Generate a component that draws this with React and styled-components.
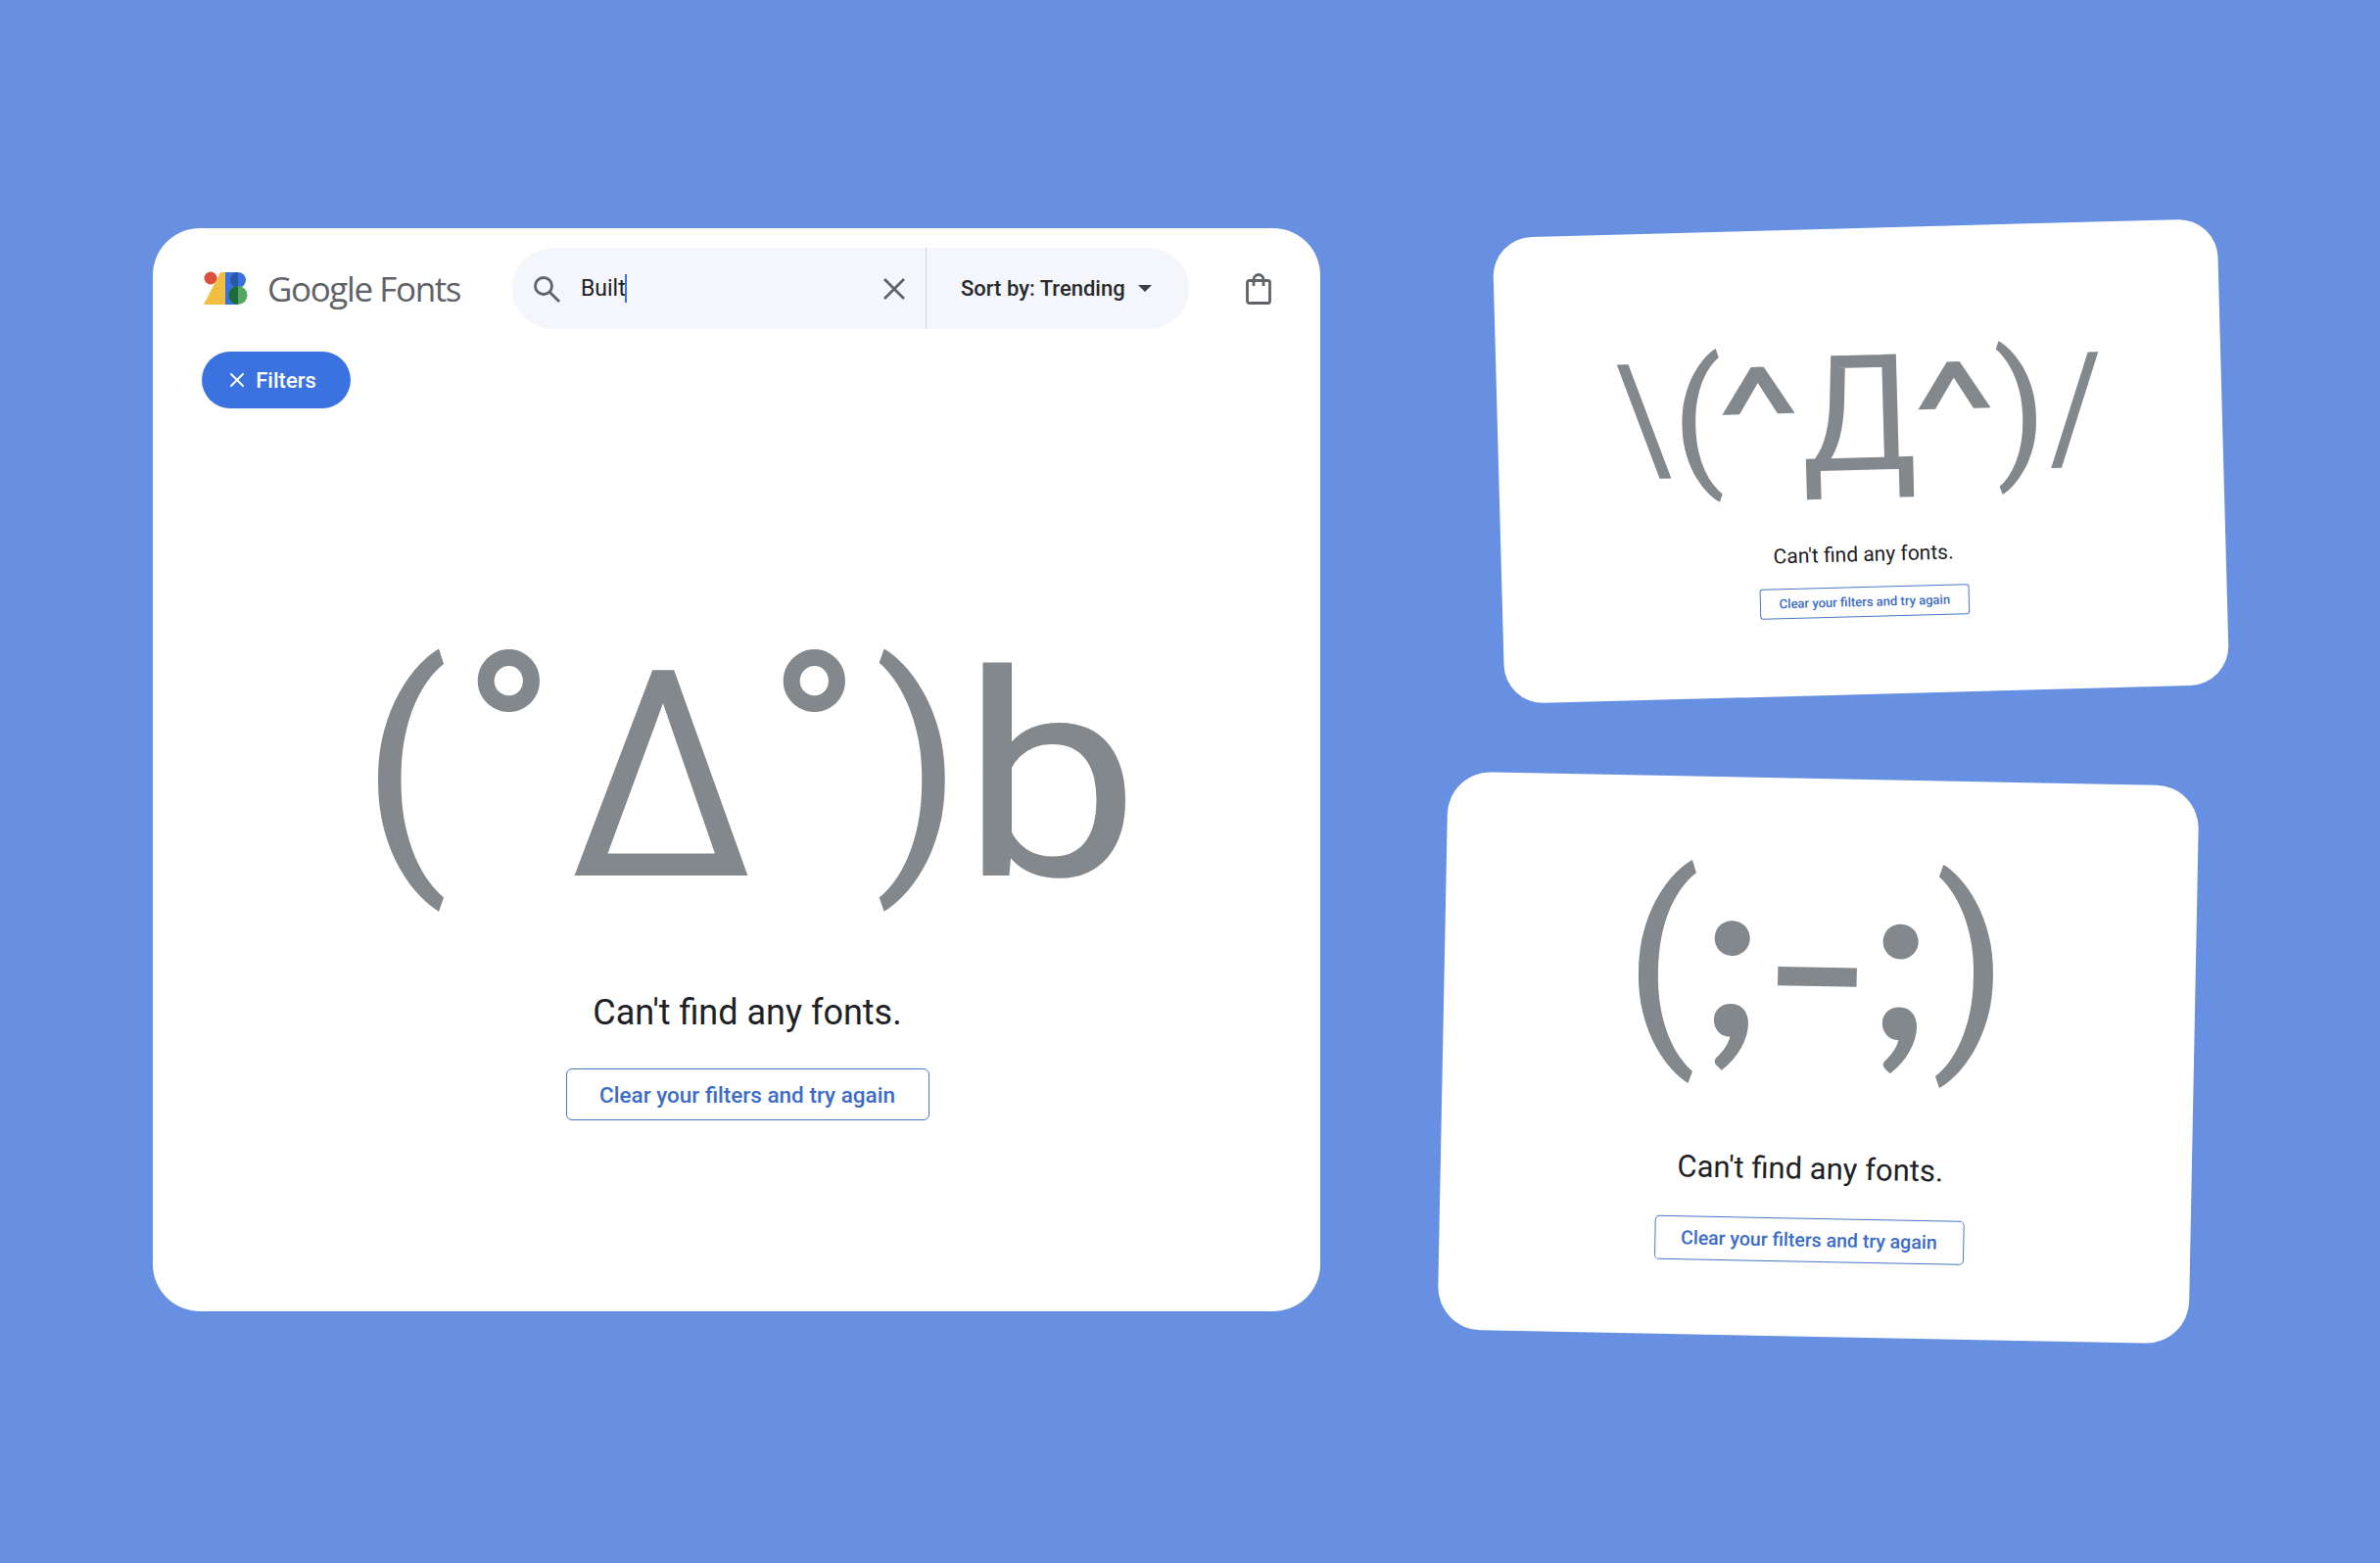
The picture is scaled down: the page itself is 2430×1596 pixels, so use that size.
import React from 'react';
import styled, { createGlobalStyle } from 'styled-components';
import { X } from 'lucide-react';

const GlobalStyle = createGlobalStyle`
  html, body {
    margin: 0;
    padding: 0;
    background-color: #6790e2;
    font-family: Roboto, "Open Sans", sans-serif;
  }
`;

const Stage = styled.div`
  width: 2430px;
  height: 1596px;
  box-sizing: border-box;
  padding: 233px 0 0 156px;
  display: flex;
  align-items: flex-start;
  background-color: #6790e2;
  overflow: hidden;
`;

const MainCard = styled.section`
  width: 1192px;
  height: 1106px;
  box-sizing: border-box;
  padding: 20px 50px 0;
  display: flex;
  flex-direction: column;
  background-color: #fff;
  border-radius: 48px;
`;

const SideColumn = styled.div`
  margin-left: 125px;
  display: flex;
  flex-direction: column;
  align-items: flex-start;
  gap: 86px;
`;

const TiltedCard = styled.section`
  width: ${(p) => p.$width}px;
  height: ${(p) => p.$height}px;
  margin-left: ${(p) => p.$indent}px;
  padding-top: ${(p) => p.$top}px;
  box-sizing: border-box;
  background-color: #fff;
  border-radius: ${(p) => p.$radius}px;
  transform: rotate(${(p) => p.$tilt}deg);
`;

const Header = styled.header`
  display: flex;
  align-items: center;
  height: 83px;
`;

const Brand = styled.div`
  width: 315px;
  margin-left: 2px;
  display: flex;
  align-items: center;
  gap: 19px;
`;

const Wordmark = styled.span`
  font-family: "Open Sans", sans-serif;
  font-size: 35px;
  letter-spacing: -1.4px;
  color: #5f6368;
  white-space: nowrap;
`;

const SearchBar = styled.div`
  width: 691px;
  height: 83px;
  display: flex;
  align-items: center;
  background-color: #f4f6fb;
  border-radius: 42px;
`;

const SearchField = styled.div`
  width: 422px;
  flex: none;
  box-sizing: border-box;
  padding: 0 20px;
  display: flex;
  align-items: center;
  gap: 20px;
`;

const SearchText = styled.span`
  flex: 1;
  font-size: 23px;
  color: #202124;
`;

const Caret = styled.span`
  display: inline-block;
  width: 2px;
  height: 29px;
  margin-left: -1px;
  vertical-align: -7px;
  background-color: #3a70e0;
`;

const SortBox = styled.div`
  flex: 1;
  height: 100%;
  padding-left: 35px;
  display: flex;
  align-items: center;
  gap: 13px;
  border-left: 1px solid #d3d5d9;
  font-size: 22px;
  font-weight: 500;
  color: #27292c;
`;

const BagButton = styled.div`
  margin-left: 58px;
  display: flex;
`;

const FiltersPill = styled.div`
  width: 152px;
  height: 58px;
  margin-top: 23px;
  box-sizing: border-box;
  padding-right: 11px;
  display: flex;
  align-items: center;
  justify-content: center;
  gap: 7px;
  background-color: #3a72e0;
  border-radius: 29px;
  color: #fff;
  font-size: 22px;
  font-weight: 500;
`;

const Empty = styled.div`
  display: flex;
  flex-direction: column;
  align-items: center;
  margin-top: ${(p) => p.$top || 0}px;
  margin-left: ${(p) => p.$shift || 0}px;
`;

const Face = styled.div`
  display: flex;
  align-items: baseline;
  height: ${(p) => p.$height}px;
  line-height: ${(p) => p.$height}px;
  margin-left: ${(p) => p.$nudge || 0}px;
  font-family: Roboto, sans-serif;
  color: #83888c;
  white-space: nowrap;
`;

// each glyph sits in a box of its own so the face can be spaced by hand
const Glyph = styled.span`
  flex: none;
  width: ${(p) => p.$w}px;
  display: inline-flex;
  justify-content: center;
  font-size: ${(p) => p.$size}px;
  font-family: ${(p) => p.$font || 'Roboto'}, sans-serif;
  font-weight: ${(p) => p.$weight || 400};
  transform: translateY(${(p) => -(p.$lift || 0)}px) scaleX(${(p) => p.$sx || 1});
`;

const Message = styled.p`
  margin: ${(p) => p.$gap}px 0 0;
  font-size: ${(p) => p.$size}px;
  line-height: 1.2;
  color: #202124;
`;

const ClearButton = styled.div`
  width: ${(p) => p.$width}px;
  height: ${(p) => p.$height}px;
  margin-top: ${(p) => p.$gap}px;
  box-sizing: border-box;
  display: flex;
  align-items: center;
  justify-content: center;
  border: ${(p) => p.$line}px solid #4b78c6;
  border-radius: ${(p) => p.$radius}px;
  font-size: ${(p) => p.$size}px;
  font-weight: 500;
  color: #3b6cc7;
  white-space: nowrap;
`;

const LogoMark = () => (
  <svg width="46" height="35" viewBox="0 0 46 35">
    <path d="M0 34 L17 1 H22 V34 Z" fill="#f2bf42" />
    <circle cx="7" cy="7" r="6.5" fill="#dc4f3c" />
    <path d="M22 1 H35 A8 8 0 0 1 35 17 V34 H22 Z" fill="#3a72e0" />
    <path d="M35 1 A8 8 0 0 0 35 17 Z" fill="#2a56a8" />
    <circle cx="35" cy="24.5" r="9.5" fill="#55a85f" />
    <path d="M35 15 A9.5 9.5 0 0 0 35 34 Z" fill="#1d6b3a" />
  </svg>
);

const SearchIcon = () => (
  <svg width="30" height="30" viewBox="0 0 30 30" fill="none" stroke="#5f6368" strokeWidth="2.8">
    <circle cx="12" cy="12" r="8.5" />
    <path d="M18 18 L28 28" />
  </svg>
);

const CloseIcon = () => (
  <svg width="24" height="24" viewBox="0 0 24 24" fill="none" stroke="#5f6368" strokeWidth="2.8">
    <path d="M2 2 L22 22 M22 2 L2 22" />
  </svg>
);

const CaretDown = () => (
  <svg width="14" height="7" viewBox="0 0 14 7">
    <path d="M0 0 H14 L7 7 Z" fill="#3c4043" />
  </svg>
);

const BagIcon = () => (
  <svg width="26" height="32" viewBox="0 0 26 32" fill="none" stroke="#5f6368" strokeWidth="2.8">
    <rect x="1.5" y="7.5" width="23" height="23" rx="2" />
    <path d="M8 13 V6.5 A5 5 0 0 1 18 6.5 V13" />
  </svg>
);

const EmptyState = ({ face, faceHeight, nudge, top, shift, msgSize, msgGap, btn }) => (
  <Empty $top={top} $shift={shift}>
    <Face $height={faceHeight} $nudge={nudge}>{face}</Face>
    <Message $size={msgSize} $gap={msgGap}>Can't find any fonts.</Message>
    <ClearButton $width={btn.width} $height={btn.height} $gap={btn.gap} $line={btn.line} $radius={btn.radius} $size={btn.size}>
      Clear your filters and try again
    </ClearButton>
  </Empty>
);

const App = () => (
  <Stage>
    <GlobalStyle />
    <MainCard>
      <Header>
        <Brand>
          <LogoMark />
          <Wordmark>Google Fonts</Wordmark>
        </Brand>
        <SearchBar>
          <SearchField>
            <SearchIcon />
            <SearchText>Built<Caret /></SearchText>
            <CloseIcon />
          </SearchField>
          <SortBox>
            Sort by: Trending
            <CaretDown />
          </SortBox>
        </SearchBar>
        <BagButton><BagIcon /></BagButton>
      </Header>
      <FiltersPill><X size={24} strokeWidth={2} />Filters</FiltersPill>
      <EmptyState
        top={216}
        shift={22}
        nudge={35}
        faceHeight={320}
        msgSize={36}
        msgGap={60}
        face={<>
          <Glyph $w={58} $size={260} $lift={23}>(</Glyph>
          <Glyph $w={154} $size={240} $weight={700} $lift={58}>°</Glyph>
          <Glyph $w={158} $size={295} $sx={0.9}>Δ</Glyph>
          <Glyph $w={154} $size={240} $weight={700} $lift={58}>°</Glyph>
          <Glyph $w={59} $size={260} $lift={23}>)</Glyph>
          <Glyph $w={209} $size={290} $sx={1.12}>b</Glyph>
        </>}
        btn={{ width: 371, height: 53, gap: 35, line: 1.5, radius: 6, size: 22.5 }}
      />
    </MainCard>
    <SideColumn>
      <TiltedCard $width={740} $height={476} $indent={57} $radius={40} $tilt={-1.55} $top={106}>
        <EmptyState
          faceHeight={170}
          nudge={-11}
          msgSize={21}
          msgGap={45}
          face={<>
            <Glyph $w={56} $size={152} $sx={0.9} $lift={6}>\</Glyph>
            <Glyph $w={56} $size={152} $lift={6}>(</Glyph>
            <Glyph $w={68} $size={135} $sx={1.55} $lift={12}>^</Glyph>
            <Glyph $w={136} $size={165} $sx={0.95}>Д</Glyph>
            <Glyph $w={60} $size={135} $sx={1.55} $lift={12}>^</Glyph>
            <Glyph $w={76} $size={152} $lift={6}>)</Glyph>
            <Glyph $w={36} $size={152} $sx={0.9} $lift={6}>/</Glyph>
          </>}
          btn={{ width: 214, height: 31, gap: 20, line: 1, radius: 3, size: 13 }}
        />
      </TiltedCard>
      <TiltedCard $width={767} $height={570} $indent={0} $radius={44} $tilt={1.12} $top={51}>
        <EmptyState
          shift={-12}
          faceHeight={240}
          nudge={6}
          msgSize={31}
          msgGap={89}
          face={<>
            <Glyph $w={44} $size={221}>(</Glyph>
            <Glyph $w={100} $size={238} $font="Lato" $weight={700} $lift={-3}>;</Glyph>
            <Glyph $w={74} $size={260} $sx={1.3} $lift={-18}>-</Glyph>
            <Glyph $w={96} $size={238} $font="Lato" $weight={700} $lift={-3}>;</Glyph>
            <Glyph $w={48} $size={221}>)</Glyph>
          </>}
          btn={{ width: 316, height: 45, gap: 32, line: 1.5, radius: 5, size: 19.5 }}
        />
      </TiltedCard>
    </SideColumn>
  </Stage>
);

export default App;
